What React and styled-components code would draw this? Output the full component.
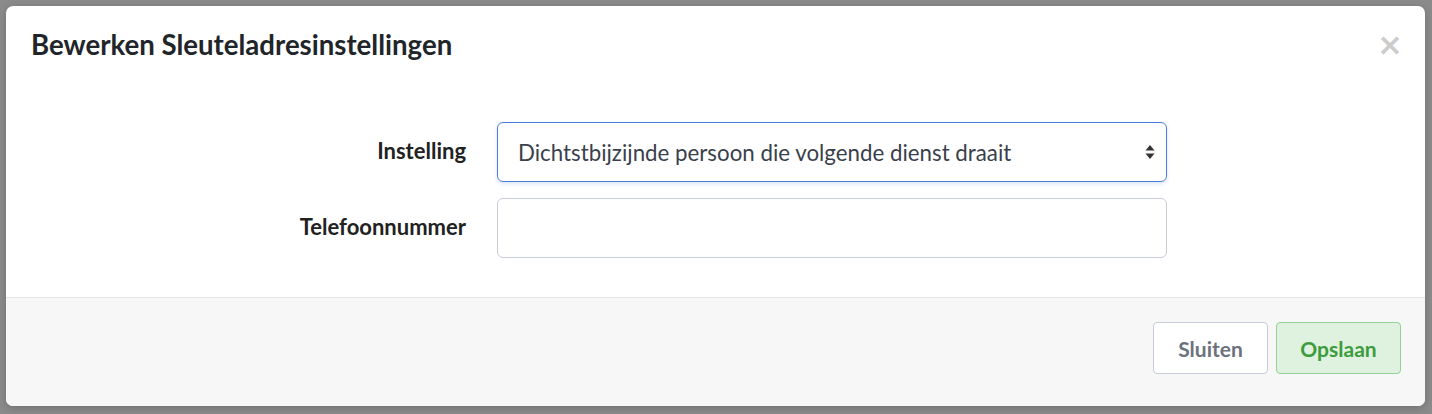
import React from 'react';
import styled, { createGlobalStyle } from 'styled-components';

const GlobalStyle = createGlobalStyle`
  html, body {
    margin: 0;
    padding: 0;
    background: #8b8b8b;
    font-family: 'Lato', 'Noto Sans', sans-serif;
  }
`;

const Backdrop = styled.div`
  width: 1432px;
  height: 414px;
  box-sizing: border-box;
  padding: 6px 7px 8px 6px;
  background: #8b8b8b;
`;

const Modal = styled.div`
  height: 100%;
  background: #fff;
  border-radius: 7px;
  overflow: hidden;
  display: flex;
  flex-direction: column;
  box-shadow: 0 2px 8px rgba(0, 0, 0, 0.2);
`;

const Header = styled.div`
  display: flex;
  align-items: center;
  justify-content: space-between;
  padding: 18px 22px 0 25px;
  height: 40px;
`;

const Title = styled.h4`
  margin: 0;
  font-size: 27.6px;
  font-weight: 700;
  color: #212529;
`;

const Close = styled.button`
  border: none;
  background: none;
  padding: 0;
  font-family: 'DejaVu Sans', sans-serif;
  font-size: 31px;
  font-weight: 700;
  line-height: 1;
  color: #cccccc;
  cursor: pointer;
`;

const Body = styled.div`
  flex: 1;
  display: grid;
  grid-template-columns: 460px 670px;
  grid-auto-rows: 60px;
  column-gap: 31px;
  row-gap: 16px;
  align-content: start;
  padding-top: 58px;
`;

const Label = styled.label`
  display: flex;
  align-items: center;
  justify-content: flex-end;
  font-size: 22px;
  font-weight: 700;
  color: #222;
  padding-bottom: 3px;
`;

const SelectBox = styled.div`
  position: relative;
  display: flex;
  align-items: center;
  box-sizing: border-box;
  border: 1px solid ${p => (p.$focus ? '#4a7ed4' : '#c6cbd5')};
  border-radius: 6px;
  padding: 0 20px;
  font-size: 22.3px;
  color: #3a3f4c;
  box-shadow: ${p => (p.$focus ? '0 2px 4px rgba(74, 126, 212, 0.2)' : 'none')};
`;

const Arrows = styled.svg`
  position: absolute;
  right: 11px;
  top: 50%;
  transform: translateY(-50%);
`;

const Footer = styled.div`
  border-top: 1px solid #e4e4e4;
  background: #f7f7f7;
  height: 109px;
  box-sizing: border-box;
  display: flex;
  justify-content: flex-end;
  align-items: flex-start;
  gap: 8px;
  padding: 24px 24px 0 0;
`;

const Button = styled.button`
  height: 52px;
  box-sizing: border-box;
  padding: 0 20px;
  border-radius: 4px;
  font-family: inherit;
  font-size: 21px;
  font-weight: 700;
  cursor: pointer;
  border: 1px solid ${p => (p.$primary ? '#93d293' : '#c6ccd9')};
  background: ${p => (p.$primary ? '#dff1df' : '#ffffff')};
  color: ${p => (p.$primary ? '#3d9c3d' : '#6c727d')};
  min-width: ${p => (p.$primary ? '125px' : '115px')};
`;

export default function App() {
  return (
    <>
      <GlobalStyle />
      <Backdrop>
        <Modal>
          <Header>
            <Title>Bewerken Sleuteladresinstellingen</Title>
            <Close>×</Close>
          </Header>
          <Body>
            <Label>Instelling</Label>
            <SelectBox $focus>
              Dichtstbijzijnde persoon die volgende dienst draait
              <Arrows width="10" height="16" viewBox="0 0 10 16">
                <path d="M5 1 L9.5 6.5 H0.5 Z M5 15 L9.5 9.5 H0.5 Z" fill="#333" />
              </Arrows>
            </SelectBox>
            <Label>Telefoonnummer</Label>
            <SelectBox />
          </Body>
          <Footer>
            <Button>Sluiten</Button>
            <Button $primary>Opslaan</Button>
          </Footer>
        </Modal>
      </Backdrop>
    </>
  );
}
